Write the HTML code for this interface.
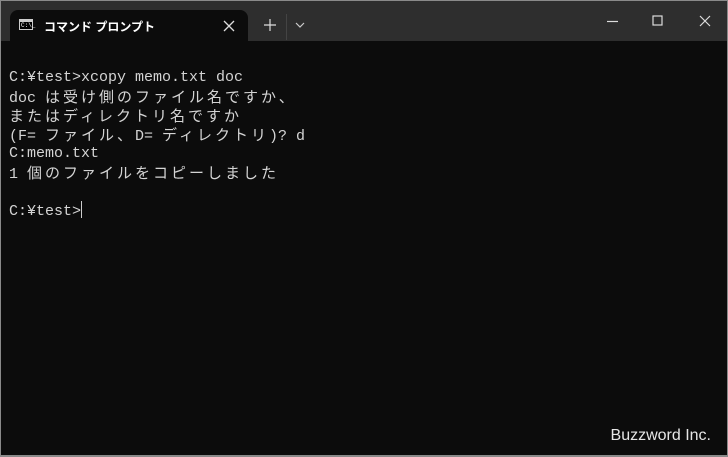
<!DOCTYPE html>
<html><head><meta charset="utf-8"><style>
html,body{margin:0;padding:0;}
body{width:728px;height:457px;overflow:hidden;background:#8a8a8a;position:relative;font-family:"Liberation Sans","Noto Sans CJK JP",sans-serif;}
.win{position:absolute;left:1px;top:1px;width:726px;height:454px;background:#0c0c0c;overflow:hidden;}
.bar{position:absolute;left:0;top:0;width:726px;height:40px;background:#2e2e2e;}
.tab{position:absolute;left:9px;top:9px;width:238px;height:32px;background:#0c0c0c;border-radius:8px 8px 0 0;}
.tab .t{position:absolute;left:34px;top:8px;color:#fff;font-size:12px;font-weight:bold;}
.icon{position:absolute;left:9px;top:9px;width:14px;height:11px;border:1px solid #ccc;background:#000;box-sizing:border-box;}
.icon:before{content:"";position:absolute;left:0;top:0;right:0;height:2px;background:#ccc;}
.icon span{position:absolute;left:1px;top:2px;font-size:6px;color:#fff;font-family:"Liberation Mono",monospace;line-height:7px;}
.term{position:absolute;left:8px;top:67px;color:#d4d4d4;font-family:"Liberation Mono","Noto Sans CJK JP",monospace;font-size:15px;}
.term div{height:19px;line-height:19px;white-space:pre;overflow:visible;}
.j{font-family:"Noto Sans CJK JP",sans-serif;letter-spacing:3px;line-height:19px;}
.wm{position:absolute;right:16px;top:426px;color:#e6e6e6;font-size:16px;}
.cur{display:inline-block;width:1px;height:17px;background:#ccc;vertical-align:-3px;}
</style></head><body>
<div class="win">
 <div class="bar">
  <div class="tab">
   <div class="icon"><span>C:\_</span></div>
   <div class="t">コマンド プロンプト</div>
   <svg style="position:absolute;left:213px;top:10px" width="12" height="12"><path d="M1 1L11 11M11 1L1 11" stroke="#ddd" stroke-width="1.3"/></svg>
  </div>
  <svg style="position:absolute;left:263px;top:18px" width="12" height="12"><path d="M6 0V12M0 6H12" stroke="#ddd" stroke-width="1.2"/></svg>
  <div style="position:absolute;left:285px;top:13px;width:1px;height:26px;background:#444"></div>
  <svg style="position:absolute;left:294px;top:21px" width="10" height="6"><path d="M1 1L5 5L9 1" stroke="#ccc" stroke-width="1.2" fill="none"/></svg>
  <svg style="position:absolute;left:606px;top:19px" width="12" height="3"><path d="M0 1.5H11" stroke="#ddd" stroke-width="1.2"/></svg>
  <svg style="position:absolute;left:651px;top:14px" width="12" height="12"><rect x="1" y="1" width="9" height="9" stroke="#ddd" stroke-width="1.2" fill="none"/></svg>
  <svg style="position:absolute;left:698px;top:14px" width="12" height="12"><path d="M1 1L11 11M11 1L1 11" stroke="#ddd" stroke-width="1.2"/></svg>
 </div>
 <div class="term">
<div>C:¥test&gt;xcopy memo.txt doc</div>
<div>doc <span class="j">は受け側のファイル名ですか、</span></div>
<div><span class="j">またはディレクトリ名ですか</span></div>
<div>(F= <span class="j">ファイル、</span>D= <span class="j">ディレクトリ</span>)? d</div>
<div>C:memo.txt</div>
<div>1 <span class="j">個のファイルをコピーしました</span></div>
<div></div>
<div>C:¥test&gt;<span class="cur"></span></div>
 </div>
 <div class="wm">Buzzword Inc.</div>
</div>
</body></html>
